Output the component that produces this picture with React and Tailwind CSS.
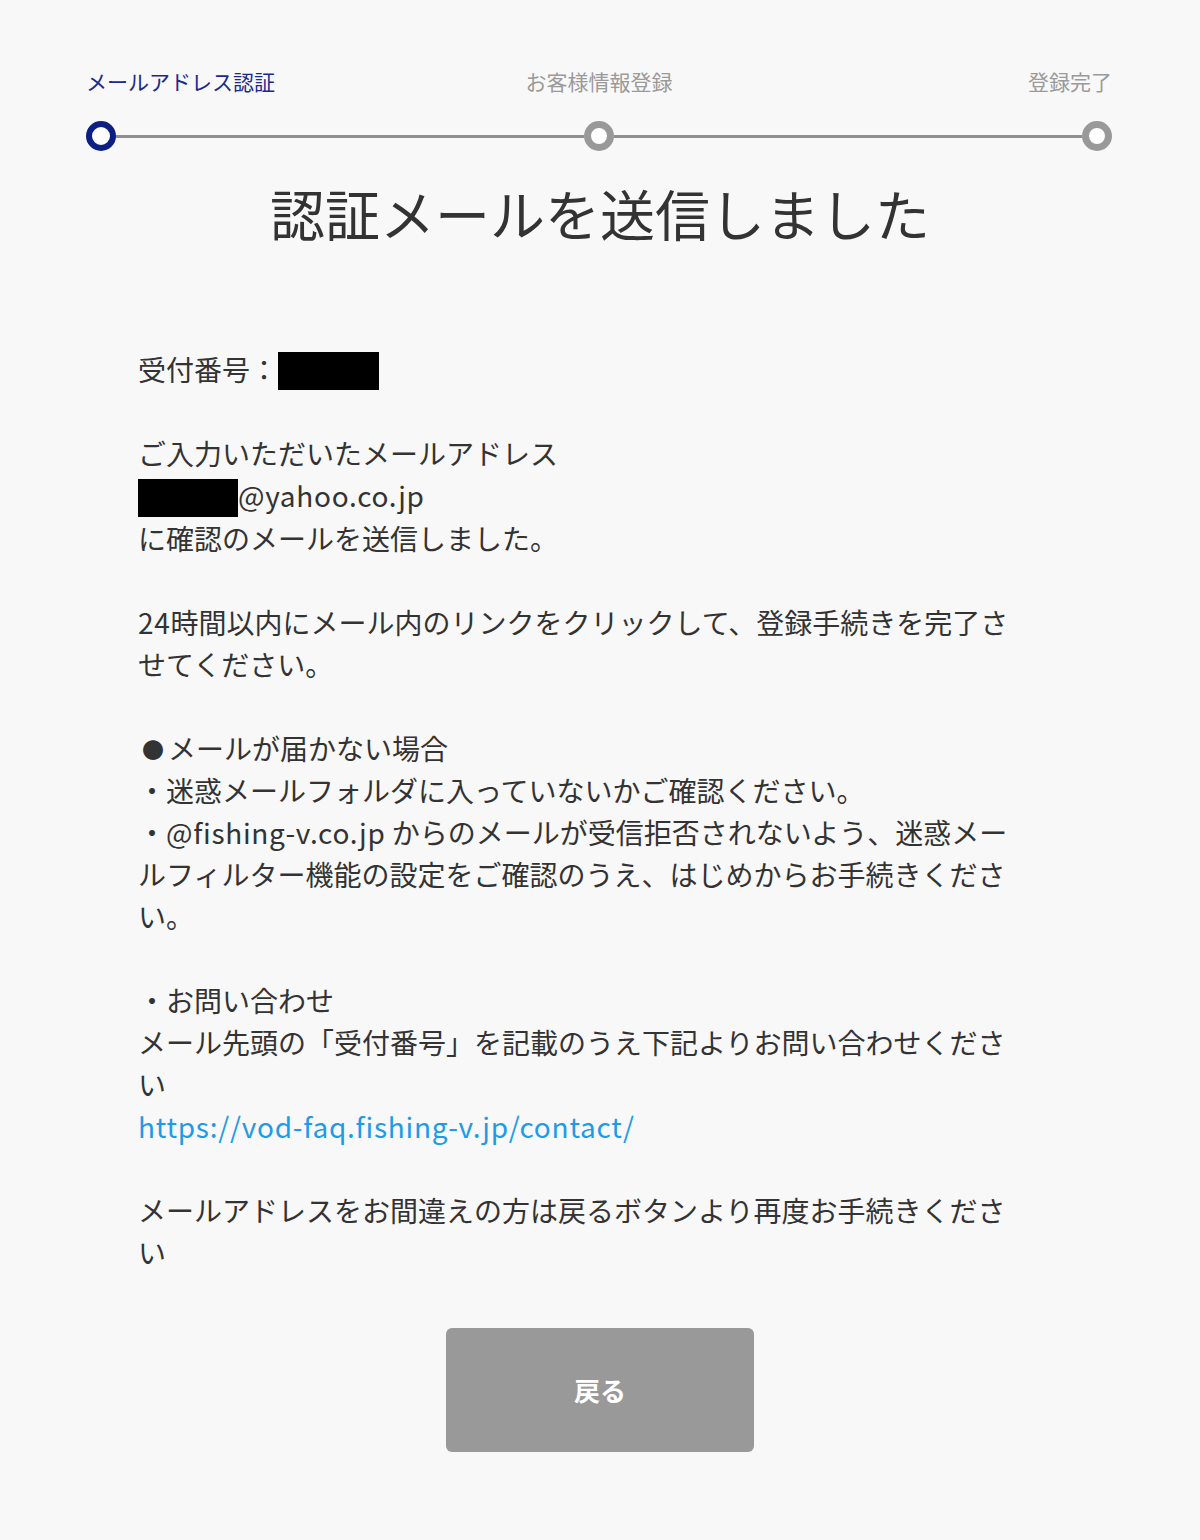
const font = { fontFamily: '"Noto Sans CJK JP", "Noto Sans", sans-serif' };

function Dot({ active }) {
  return (
    <div
      className={
        active
          ? "h-[30px] w-[30px] shrink-0 rounded-full border-[6px] border-[#0c1f83] bg-white"
          : "h-[30px] w-[30px] shrink-0 rounded-full border-[7px] border-[#999999] bg-white"
      }
    />
  );
}

function Stepper() {
  return (
    <div className="ml-[86px] w-[1026px]">
      <div className="grid grid-cols-3 text-[21px] leading-[28px]">
        <div className="text-left text-[#1a2a8c]">メールアドレス認証</div>
        <div className="text-center text-[#9a9a9a]">お客様情報登録</div>
        <div className="text-right text-[#9a9a9a]">登録完了</div>
      </div>
      <div className="mt-[26px] flex items-center">
        <Dot active />
        <div className="h-[3px] flex-1 bg-[#8f8f8f]" />
        <Dot />
        <div className="h-[3px] flex-1 bg-[#8f8f8f]" />
        <Dot />
      </div>
    </div>
  );
}

function Redacted({ className }) {
  return <span className={"inline-block bg-black align-middle " + className} />;
}

function Latin({ children, className = "" }) {
  return <span className={"tracking-[0.7px] " + className}>{children}</span>;
}

export default function App() {
  return (
    <div className="min-h-[1540px] bg-[#f8f8f8] pt-[67px] text-[#333333]" style={font}>
      <Stepper />

      <h1 className="mt-[21px] text-center text-[55px] leading-[80px] text-[#333333]">
        認証メールを送信しました
      </h1>

      <div className="mx-auto mt-[96px] w-[924px] text-[28px] leading-[42px]">
        <p>
          受付番号：<Redacted className="-mt-[4px] h-[38px] w-[101px]" />
        </p>
        <br />
        <p>
          ご入力いただいたメールアドレス
          <br />
          <Redacted className="-mt-[4px] h-[38px] w-[100px]" />
          <Latin>@yahoo.co.jp</Latin>
          <br />
          に確認のメールを送信しました。
        </p>
        <br />
        <p>
          <Latin>24</Latin>時間以内にメール内のリンクをクリックして、登録手続きを完了さ
          <br />
          せてください。
        </p>
        <br />
        <p>
          <span className="inline-block h-[42px] w-[30px] text-center align-top text-[22px] leading-[42px]">●</span>
          メールが届かない場合
          <br />
          ・迷惑メールフォルダに入っていないかご確認ください。
          <br />
          ・<Latin>@fishing-v.co.jp</Latin> からのメールが受信拒否されないよう、迷惑メー
          <br />
          ルフィルター機能の設定をご確認のうえ、はじめからお手続きくださ
          <br />
          い。
        </p>
        <br />
        <p>
          ・お問い合わせ
          <br />
          メール先頭の「受付番号」を記載のうえ下記よりお問い合わせくださ
          <br />
          い
          <br />
          <a href="#" className="tracking-[0.75px] text-[#1e9be8]">
            https://vod-faq.fishing-v.jp/contact/
          </a>
        </p>
        <br />
        <p>
          メールアドレスをお間違えの方は戻るボタンより再度お手続きくださ
          <br />
          い
        </p>
      </div>

      <div className="mt-[55px] flex justify-center">
        <button
          type="button"
          className="flex h-[124px] w-[308px] items-center justify-center rounded-[6px] bg-[#999999] text-[26px] font-bold text-white"
        >
          戻る
        </button>
      </div>
    </div>
  );
}
